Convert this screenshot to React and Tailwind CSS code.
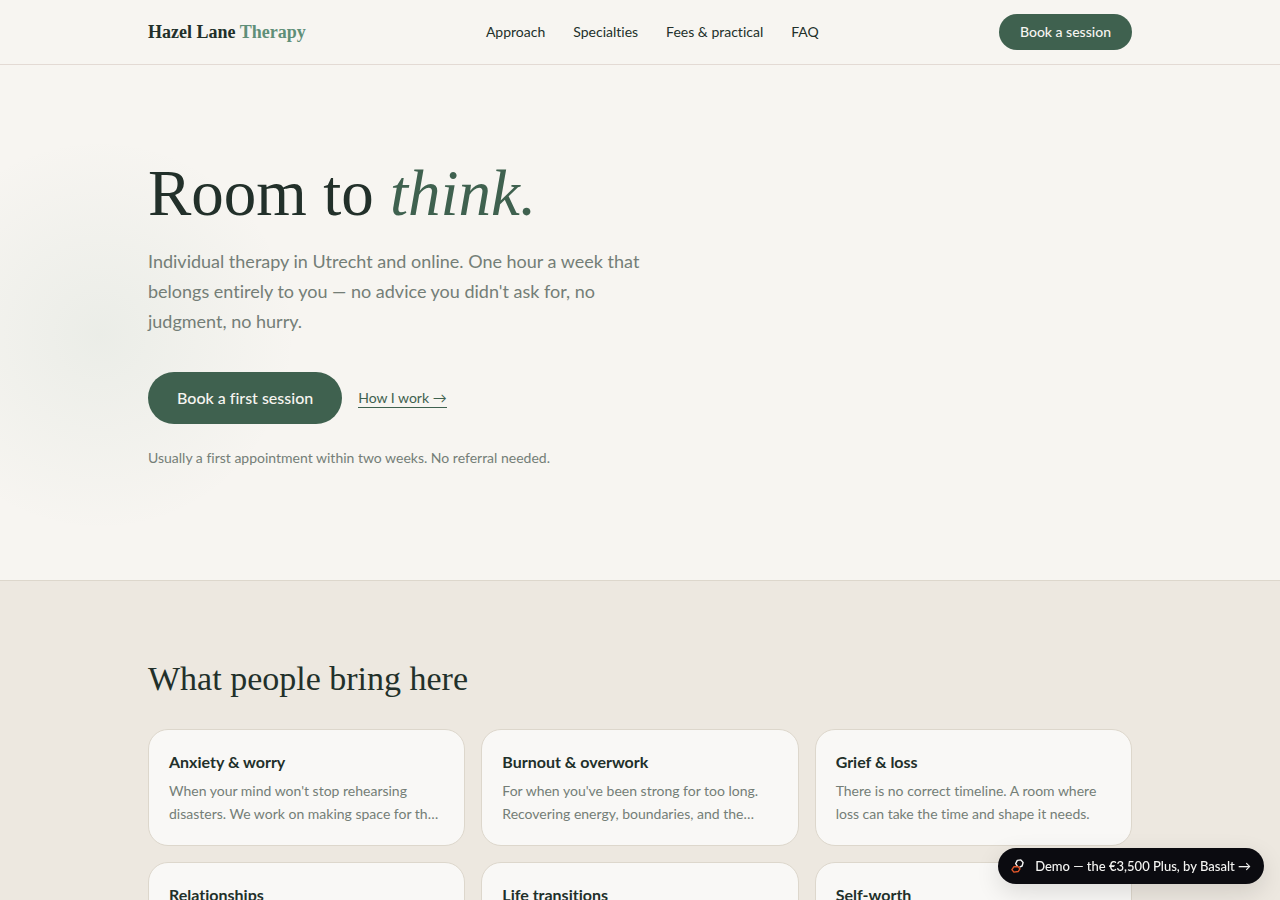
import React from 'react';

const navLinks = [
  { label: 'Approach', href: '#approach' },
  { label: 'Specialties', href: '#specialties' },
  { label: 'Fees & practical', href: '#fees' },
  { label: 'FAQ', href: '#faq' },
];

const specialties = [
  {
    title: 'Anxiety & worry',
    text: "When your mind won't stop rehearsing disasters. We work on making space for th…",
  },
  {
    title: 'Burnout & overwork',
    text: "For when you've been strong for too long. Recovering energy, boundaries, and the…",
  },
  {
    title: 'Grief & loss',
    text: 'There is no correct timeline. A room where loss can take the time and shape it needs.',
  },
  { title: 'Relationships', text: 'Patterns that keep repeating, and the conversations you avoid.' },
  { title: 'Life transitions', text: 'New country, new job, new family. Finding your footing again.' },
  { title: 'Self-worth', text: 'The inner critic, and learning to be on your own side again.' },
];

const Header = () => (
  <header className="border-b border-[#e3dad4]">
    <div className="max-w-[1032px] mx-auto px-6 h-16 flex items-center justify-between">
      <a href="#top" className="font-['Liberation_Serif',serif] font-bold text-lg leading-6 text-[#22302a]">
        Hazel Lane <span className="text-[#5f8f78]">Therapy</span>
      </a>
      <nav className="flex items-center gap-7 text-sm">
        {navLinks.map((link) => (
          <a key={link.label} href={link.href}>
            {link.label}
          </a>
        ))}
      </nav>
      <button type="button" className="h-9 px-[21px] rounded-full bg-[#3f614f] text-[#f7f5f1] text-sm font-medium">
        Book a session
      </button>
    </div>
  </header>
);

const Hero = () => (
  <section className="relative overflow-hidden">
    {/* Soft glow */}
    <div className="absolute -left-[180px] -top-[10px] size-[560px] rounded-full pointer-events-none bg-[radial-gradient(circle_closest-side,#5f8f7814_0%,transparent_70%)]" />
    <div className="relative max-w-[1032px] mx-auto px-6 pt-24 pb-28">
      <h1 className="font-['Liberation_Serif',serif] text-[65px] leading-[65px]">
        Room to <em className="text-[#3f614f]">think.</em>
      </h1>
      <p className="mt-5 max-w-[510px] text-lg leading-[30px] text-[#747e77]">
        Individual therapy in Utrecht and online. One hour a week that belongs entirely to you — no advice you didn't
        ask for, no judgment, no hurry.
      </p>
      <div className="mt-9 flex items-center gap-4">
        <button type="button" className="h-[52px] px-[29px] rounded-full bg-[#3f614f] text-[#f7f5f1] text-base font-medium">
          Book a first session
        </button>
        <a href="#approach" className="text-sm leading-[18px] text-[#3f614f] border-b border-[#3f614f]">
          How I work →
        </a>
      </div>
      <p className="mt-6 text-sm text-[#747e77]">
        Usually a first appointment within two weeks. No referral needed.
      </p>
    </div>
  </section>
);

const SpecialtyCard = ({ title, text }) => (
  <article className="rounded-[20px] border border-[#ddd7cc] bg-[#f9f8f6] p-5">
    <h3 className="text-base font-bold">{title}</h3>
    <p className="mt-[5px] text-sm leading-[23px] text-[#747e77]">{text}</p>
  </article>
);

const Specialties = () => (
  <section id="specialties" className="border-t border-[#ddd7cc] bg-[#ede8e0]">
    <div className="max-w-[1032px] mx-auto px-6 py-20">
      <h2 className="font-['Liberation_Serif',serif] text-[34px] leading-9">What people bring here</h2>
      <div className="mt-8 grid grid-cols-3 gap-4">
        {specialties.map((item) => (
          <SpecialtyCard key={item.title} {...item} />
        ))}
      </div>
    </div>
  </section>
);

const DemoBadge = () => (
  <a
    href="#demo"
    className="fixed right-4 bottom-4 h-9 px-[13px] rounded-full bg-[#0b0b10] text-[#f4f4f2] text-[13px] font-medium leading-5 flex items-center gap-2.5 shadow-[0_8px_24px_rgba(0,0,0,0.12)]"
  >
    <svg width="14" height="14" viewBox="0 0 14 14" fill="none" strokeWidth="1.4" strokeLinejoin="round" aria-hidden="true">
      <path d="M6.4 7.2 4.7 4.6 6.3 1.4 9.8.9l2.3 2.6-1 3.5-2.6 1.2" stroke="#f4f4f2" />
      <path d="M3 7.7 6.9 7.5l2 2.3-1.6 2.7-4.4.6L.9 10.6z" stroke="#e2572b" />
    </svg>
    Demo — the €3,500 Plus, by Basalt →
  </a>
);

const App = () => {
  return (
    <div
      id="top"
      className="min-h-screen bg-[#f7f5f1] text-[#22302a] font-[Lato,sans-serif] [font-variant-ligatures:no-common-ligatures]"
    >
      <Header />
      <main>
        <Hero />
        <Specialties />
      </main>
      <DemoBadge />
    </div>
  );
};

export default App;
